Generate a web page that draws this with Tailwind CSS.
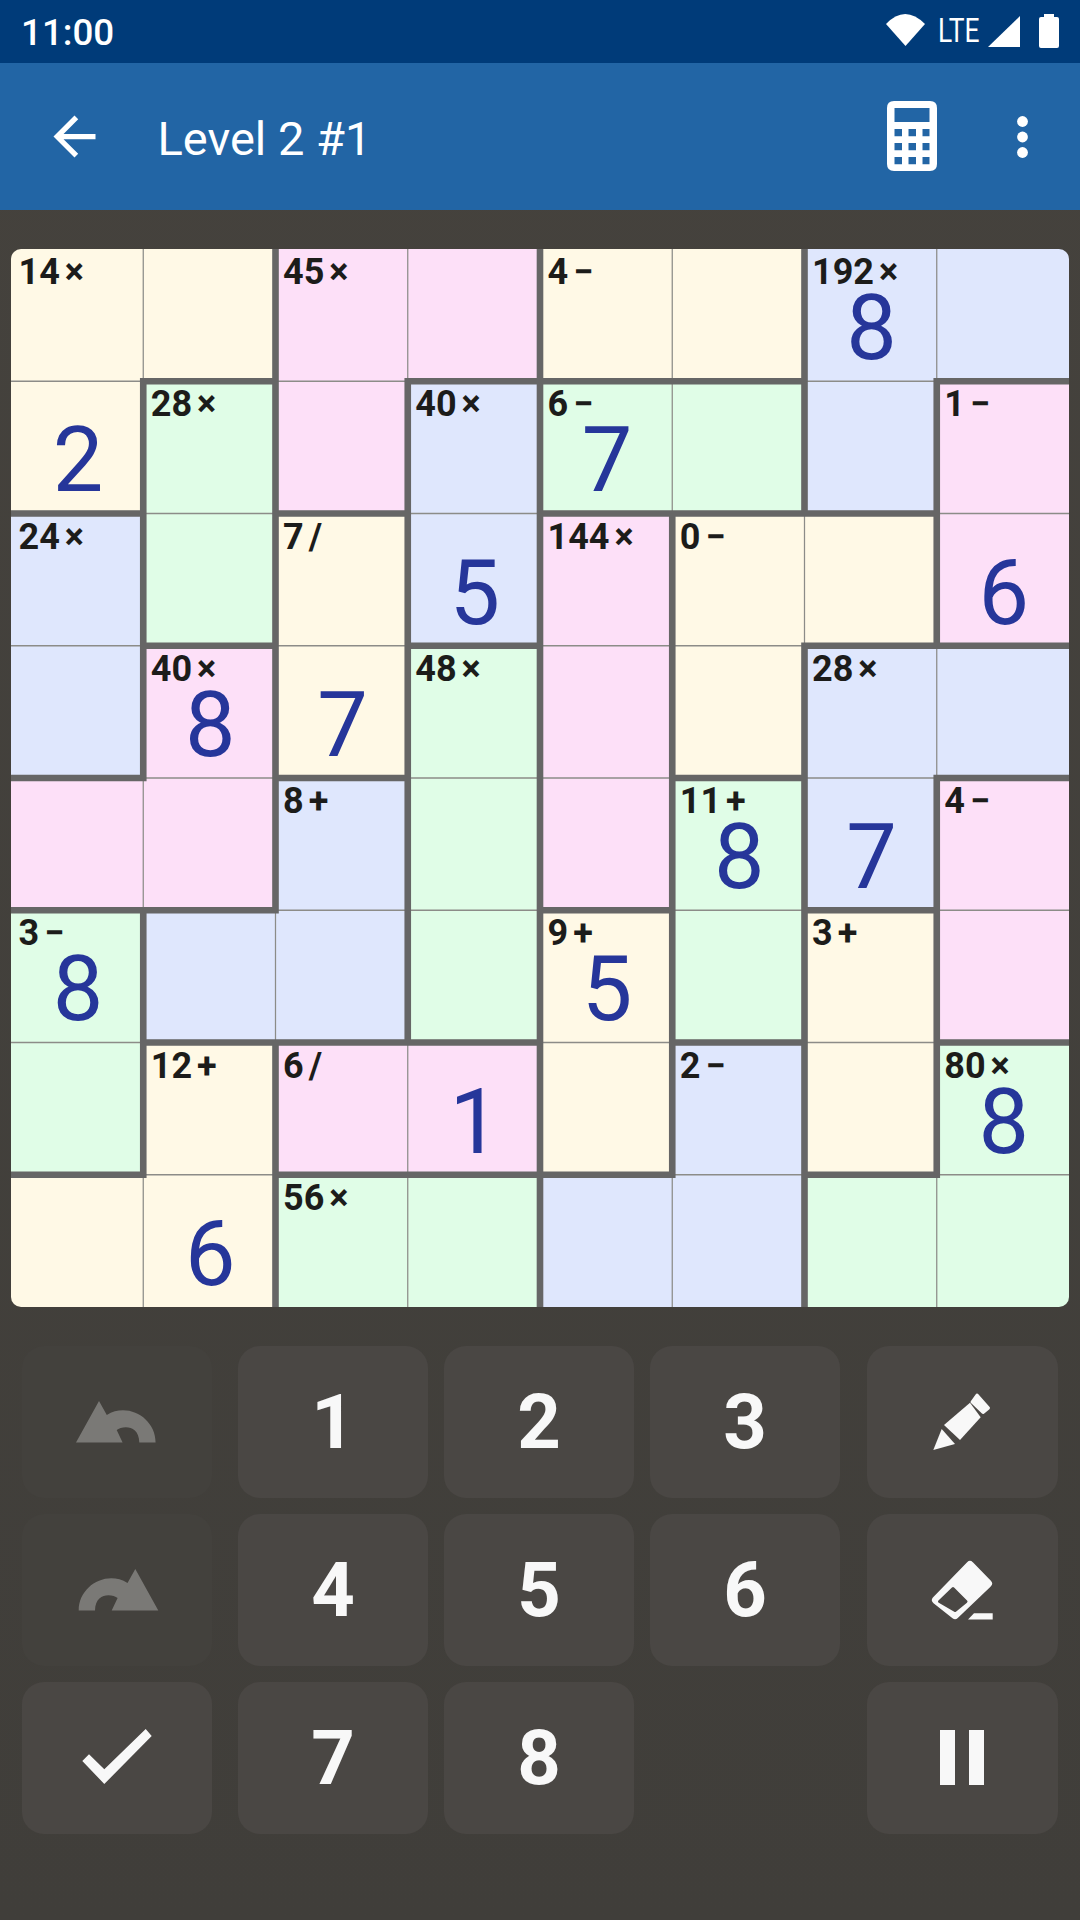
<!DOCTYPE html>
<html>
<head>
<meta charset="utf-8">
<script src="https://cdn.jsdelivr.net/npm/@tailwindcss/browser@4"></script>
</head>
<body>
<div class="w-[1080px] h-[1920px] flex flex-col bg-linear-to-b from-[#45423d] to-[#403e3a] overflow-hidden [font-family:Roboto,sans-serif]">
  <!-- status bar -->
  <div class="h-[63px] shrink-0 flex items-center bg-[#003b79] text-white">
    <span class="ml-[21px] mt-[3px] text-[36.75px] font-medium leading-none">11:00</span>
    <svg class="ml-auto w-[39px] h-[32px] mt-[-3px]" viewBox="886 14 39 32"><path fill="#fff" d="M886 24Q905 4 925 24L905.5 46Z"/></svg>
    <span class="ml-[13px] w-[50px] text-[33px] font-normal leading-none origin-left scale-x-[.8] mt-[-2px]">LTE</span>
    <svg class="w-[32px] h-[31px] mt-[-1px]" viewBox="988 15 32 31"><path fill="#fff" d="M988 46L1020 15V46Z"/></svg>
    <svg class="ml-[19px] mr-[21px] w-[20px] h-[34px] mt-[-1px]" viewBox="0 0 20 34"><path fill="#fff" d="M5 0H15V3H18Q20 3 20 5V32Q20 34 18 34H2Q0 34 0 32V5Q0 3 2 3H5Z"/></svg>
  </div>
  <!-- app bar -->
  <div class="h-[147px] shrink-0 flex items-center bg-[#2265a5] text-white">
    <svg class="ml-[42.5px] w-[63px] h-[63px] mt-[-1px]" viewBox="0 0 24 24"><path fill="#fff" d="M20 11H7.83l5.59-5.59L12 4l-8 8 8 8 1.41-1.41L7.83 13H20v-2z"/></svg>
    <span class="ml-[52px] mt-[3px] text-[47px] leading-none">Level 2 #1</span>
    <svg class="ml-auto w-[50px] h-[70px] mt-[-1px]" viewBox="0 0 50 70"><path fill="#fff" fill-rule="evenodd" d="M7 0H43Q50 0 50 7V63Q50 70 43 70H7Q0 70 0 63V7Q0 0 7 0ZM7.5 7V21H42.5V7ZM7.5 28V35.3H15V28ZM21.5 28V35.3H29V28ZM35.5 28V35.3H42.5V28ZM7.5 42V49.3H15V42ZM21.5 42V49.3H29V42ZM35.5 42V49.3H42.5V42ZM7.5 56V63.3H15V56ZM21.5 56V63.3H29V56ZM35.5 56V63.3H42.5V56Z"/></svg>
    <svg class="ml-[80px] mr-[52px] w-[11px] h-[42px]" viewBox="0 0 11 42"><circle cx="5.5" cy="5.5" r="5.4" fill="#fff"/><circle cx="5.5" cy="21" r="5.4" fill="#fff"/><circle cx="5.5" cy="36.5" r="5.4" fill="#fff"/></svg>
  </div>
  <!-- board -->
  <div class="relative mt-[39px] ml-[11px] w-[1058px] h-[1058px] shrink-0 rounded-[10px] overflow-hidden text-[#1c1c1a]">
    <div class="grid grid-cols-8 grid-rows-8 w-full h-full">
      <!-- r0 -->
      <div class="grid bg-[#fff9e6]"><span class="[grid-area:1/1] pl-[7.5px] pt-[5px] text-[36px] font-bold leading-none">14<span class="ml-[5px]">×</span></span></div>
      <div class="grid bg-[#fff9e6]"></div>
      <div class="grid bg-[#fde0f8]"><span class="[grid-area:1/1] pl-[7.5px] pt-[5px] text-[36px] font-bold leading-none">45<span class="ml-[5px]">×</span></span></div>
      <div class="grid bg-[#fde0f8]"></div>
      <div class="grid bg-[#fff9e6]"><span class="[grid-area:1/1] pl-[7.5px] pt-[5px] text-[36px] font-bold leading-none">4<span class="ml-[5px]">−</span></span></div>
      <div class="grid bg-[#fff9e6]"></div>
      <div class="grid bg-[#dfe7fd]"><span class="[grid-area:1/1] pl-[7.5px] pt-[5px] text-[36px] font-bold leading-none">192<span class="ml-[5px]">×</span></span><span class="[grid-area:1/1] self-center justify-self-center translate-x-px translate-y-[14px] text-[90px] leading-none text-[#26369a]">8</span></div>
      <div class="grid bg-[#dfe7fd]"></div>
      <!-- r1 -->
      <div class="grid bg-[#fff9e6]"><span class="[grid-area:1/1] self-center justify-self-center translate-x-px translate-y-[14px] text-[90px] leading-none text-[#26369a]">2</span></div>
      <div class="grid bg-[#e0fde7]"><span class="[grid-area:1/1] pl-[7.5px] pt-[5px] text-[36px] font-bold leading-none">28<span class="ml-[5px]">×</span></span></div>
      <div class="grid bg-[#fde0f8]"></div>
      <div class="grid bg-[#dfe7fd]"><span class="[grid-area:1/1] pl-[7.5px] pt-[5px] text-[36px] font-bold leading-none">40<span class="ml-[5px]">×</span></span></div>
      <div class="grid bg-[#e0fde7]"><span class="[grid-area:1/1] pl-[7.5px] pt-[5px] text-[36px] font-bold leading-none">6<span class="ml-[5px]">−</span></span><span class="[grid-area:1/1] self-center justify-self-center translate-x-px translate-y-[14px] text-[90px] leading-none text-[#26369a]">7</span></div>
      <div class="grid bg-[#e0fde7]"></div>
      <div class="grid bg-[#dfe7fd]"></div>
      <div class="grid bg-[#fde0f8]"><span class="[grid-area:1/1] pl-[7.5px] pt-[5px] text-[36px] font-bold leading-none">1<span class="ml-[5px]">−</span></span></div>
      <!-- r2 -->
      <div class="grid bg-[#dfe7fd]"><span class="[grid-area:1/1] pl-[7.5px] pt-[5px] text-[36px] font-bold leading-none">24<span class="ml-[5px]">×</span></span></div>
      <div class="grid bg-[#e0fde7]"></div>
      <div class="grid bg-[#fff9e6]"><span class="[grid-area:1/1] pl-[7.5px] pt-[5px] text-[36px] font-bold leading-none">7<span class="ml-[5px]">/</span></span></div>
      <div class="grid bg-[#dfe7fd]"><span class="[grid-area:1/1] self-center justify-self-center translate-x-px translate-y-[14px] text-[90px] leading-none text-[#26369a]">5</span></div>
      <div class="grid bg-[#fde0f8]"><span class="[grid-area:1/1] pl-[7.5px] pt-[5px] text-[36px] font-bold leading-none">144<span class="ml-[5px]">×</span></span></div>
      <div class="grid bg-[#fff9e6]"><span class="[grid-area:1/1] pl-[7.5px] pt-[5px] text-[36px] font-bold leading-none">0<span class="ml-[5px]">−</span></span></div>
      <div class="grid bg-[#fff9e6]"></div>
      <div class="grid bg-[#fde0f8]"><span class="[grid-area:1/1] self-center justify-self-center translate-x-px translate-y-[14px] text-[90px] leading-none text-[#26369a]">6</span></div>
      <!-- r3 -->
      <div class="grid bg-[#dfe7fd]"></div>
      <div class="grid bg-[#fde0f8]"><span class="[grid-area:1/1] pl-[7.5px] pt-[5px] text-[36px] font-bold leading-none">40<span class="ml-[5px]">×</span></span><span class="[grid-area:1/1] self-center justify-self-center translate-x-px translate-y-[14px] text-[90px] leading-none text-[#26369a]">8</span></div>
      <div class="grid bg-[#fff9e6]"><span class="[grid-area:1/1] self-center justify-self-center translate-x-px translate-y-[14px] text-[90px] leading-none text-[#26369a]">7</span></div>
      <div class="grid bg-[#e0fde7]"><span class="[grid-area:1/1] pl-[7.5px] pt-[5px] text-[36px] font-bold leading-none">48<span class="ml-[5px]">×</span></span></div>
      <div class="grid bg-[#fde0f8]"></div>
      <div class="grid bg-[#fff9e6]"></div>
      <div class="grid bg-[#dfe7fd]"><span class="[grid-area:1/1] pl-[7.5px] pt-[5px] text-[36px] font-bold leading-none">28<span class="ml-[5px]">×</span></span></div>
      <div class="grid bg-[#dfe7fd]"></div>
      <!-- r4 -->
      <div class="grid bg-[#fde0f8]"></div>
      <div class="grid bg-[#fde0f8]"></div>
      <div class="grid bg-[#dfe7fd]"><span class="[grid-area:1/1] pl-[7.5px] pt-[5px] text-[36px] font-bold leading-none">8<span class="ml-[5px]">+</span></span></div>
      <div class="grid bg-[#e0fde7]"></div>
      <div class="grid bg-[#fde0f8]"></div>
      <div class="grid bg-[#e0fde7]"><span class="[grid-area:1/1] pl-[7.5px] pt-[5px] text-[36px] font-bold leading-none">11<span class="ml-[5px]">+</span></span><span class="[grid-area:1/1] self-center justify-self-center translate-x-px translate-y-[14px] text-[90px] leading-none text-[#26369a]">8</span></div>
      <div class="grid bg-[#dfe7fd]"><span class="[grid-area:1/1] self-center justify-self-center translate-x-px translate-y-[14px] text-[90px] leading-none text-[#26369a]">7</span></div>
      <div class="grid bg-[#fde0f8]"><span class="[grid-area:1/1] pl-[7.5px] pt-[5px] text-[36px] font-bold leading-none">4<span class="ml-[5px]">−</span></span></div>
      <!-- r5 -->
      <div class="grid bg-[#e0fde7]"><span class="[grid-area:1/1] pl-[7.5px] pt-[5px] text-[36px] font-bold leading-none">3<span class="ml-[5px]">−</span></span><span class="[grid-area:1/1] self-center justify-self-center translate-x-px translate-y-[14px] text-[90px] leading-none text-[#26369a]">8</span></div>
      <div class="grid bg-[#dfe7fd]"></div>
      <div class="grid bg-[#dfe7fd]"></div>
      <div class="grid bg-[#e0fde7]"></div>
      <div class="grid bg-[#fff9e6]"><span class="[grid-area:1/1] pl-[7.5px] pt-[5px] text-[36px] font-bold leading-none">9<span class="ml-[5px]">+</span></span><span class="[grid-area:1/1] self-center justify-self-center translate-x-px translate-y-[14px] text-[90px] leading-none text-[#26369a]">5</span></div>
      <div class="grid bg-[#e0fde7]"></div>
      <div class="grid bg-[#fff9e6]"><span class="[grid-area:1/1] pl-[7.5px] pt-[5px] text-[36px] font-bold leading-none">3<span class="ml-[5px]">+</span></span></div>
      <div class="grid bg-[#fde0f8]"></div>
      <!-- r6 -->
      <div class="grid bg-[#e0fde7]"></div>
      <div class="grid bg-[#fff9e6]"><span class="[grid-area:1/1] pl-[7.5px] pt-[5px] text-[36px] font-bold leading-none">12<span class="ml-[5px]">+</span></span></div>
      <div class="grid bg-[#fde0f8]"><span class="[grid-area:1/1] pl-[7.5px] pt-[5px] text-[36px] font-bold leading-none">6<span class="ml-[5px]">/</span></span></div>
      <div class="grid bg-[#fde0f8]"><span class="[grid-area:1/1] self-center justify-self-center translate-x-px translate-y-[14px] text-[90px] leading-none text-[#26369a]">1</span></div>
      <div class="grid bg-[#fff9e6]"></div>
      <div class="grid bg-[#dfe7fd]"><span class="[grid-area:1/1] pl-[7.5px] pt-[5px] text-[36px] font-bold leading-none">2<span class="ml-[5px]">−</span></span></div>
      <div class="grid bg-[#fff9e6]"></div>
      <div class="grid bg-[#e0fde7]"><span class="[grid-area:1/1] pl-[7.5px] pt-[5px] text-[36px] font-bold leading-none">80<span class="ml-[5px]">×</span></span><span class="[grid-area:1/1] self-center justify-self-center translate-x-px translate-y-[14px] text-[90px] leading-none text-[#26369a]">8</span></div>
      <!-- r7 -->
      <div class="grid bg-[#fff9e6]"></div>
      <div class="grid bg-[#fff9e6]"><span class="[grid-area:1/1] self-center justify-self-center translate-x-px translate-y-[14px] text-[90px] leading-none text-[#26369a]">6</span></div>
      <div class="grid bg-[#e0fde7]"><span class="[grid-area:1/1] pl-[7.5px] pt-[5px] text-[36px] font-bold leading-none">56<span class="ml-[5px]">×</span></span></div>
      <div class="grid bg-[#e0fde7]"></div>
      <div class="grid bg-[#dfe7fd]"></div>
      <div class="grid bg-[#dfe7fd]"></div>
      <div class="grid bg-[#e0fde7]"></div>
      <div class="grid bg-[#e0fde7]"></div>
    </div>
    <svg class="absolute inset-0 w-full h-full pointer-events-none" viewBox="0 0 8 8" fill="none">
      <path stroke="#8c8c88" stroke-width=".0095" d="M1 0V8M2 0V8M3 0V8M4 0V8M5 0V8M6 0V8M7 0V8M0 1H8M0 2H8M0 3H8M0 4H8M0 5H8M0 6H8M0 7H8"/>
      <path stroke="#666666" stroke-width=".05" stroke-linecap="square" d="M1 1H2M3 1H6M7 1H8M0 2H1M2 2H3M4 2H7M1 3H2M3 3H4M6 3H8M0 4H1M2 4H3M5 4H6M7 4H8M0 5H2M4 5H5M6 5H7M1 6H4M5 6H6M7 6H8M0 7H1M2 7H5M6 7H7M1 1V4M1 5V7M2 0V5M2 6V8M3 1V6M4 0V8M5 2V7M6 0V2M6 3V8M7 1V3M7 4V7"/>
    </svg>
  </div>
  <!-- keypad -->
  <div class="mt-[39px] ml-[22px] flex shrink-0">
    <div class="flex flex-col gap-4 w-[190px]">
      <div class="h-[152px] rounded-[22px] bg-[#43413d]"><svg class="w-full h-full" viewBox="22 1346 190 152"><path fill="#7a7976" d="M99 1401L76 1442.6H122.6L116.7 1430C122 1426 139 1424 139.3 1442.6H155.6C155.6 1418 128 1402 106.8 1415Z"/></svg></div>
      <div class="h-[152px] rounded-[22px] bg-[#43413d]"><svg class="w-full h-full" viewBox="22 1514 190 152"><path fill="#7a7976" d="M135.3 1569L158.3 1610.6H111.7L117.6 1598C112.3 1594 95.3 1592 95 1610.6H78.7C78.7 1586 106.3 1570 127.5 1583Z"/></svg></div>
      <div class="h-[152px] rounded-[22px] bg-[#4a4744]"><svg class="w-full h-full" viewBox="22 1682 190 152"><path fill="#f8f8f8" d="M82.3 1761L89 1754.3L104.3 1769.3L145.7 1729L151.7 1736L104.3 1784Z"/></svg></div>
    </div>
    <div class="ml-[26px] grid grid-cols-3 gap-4 w-[602px] grid-rows-[152px_152px_152px] text-[76px] font-bold text-[#f8f8f8] leading-none">
      <div class="rounded-[22px] bg-[#4a4744] flex items-center justify-center">1</div>
      <div class="rounded-[22px] bg-[#4a4744] flex items-center justify-center">2</div>
      <div class="rounded-[22px] bg-[#4a4744] flex items-center justify-center">3</div>
      <div class="rounded-[22px] bg-[#4a4744] flex items-center justify-center">4</div>
      <div class="rounded-[22px] bg-[#4a4744] flex items-center justify-center">5</div>
      <div class="rounded-[22px] bg-[#4a4744] flex items-center justify-center">6</div>
      <div class="rounded-[22px] bg-[#4a4744] flex items-center justify-center">7</div>
      <div class="rounded-[22px] bg-[#4a4744] flex items-center justify-center">8</div>
    </div>
    <div class="ml-[27px] flex flex-col gap-4 w-[191px]">
      <div class="h-[152px] rounded-[22px] bg-[#4a4744]"><svg class="w-full h-full" viewBox="867 1346 191 152"><path fill="#f8f8f8" d="M933.3 1450L941.7 1429L955 1444Z"/><path fill="#f8f8f8" d="M944 1425L970 1402.7L980.7 1417.3L960 1440Z"/><path fill="#f8f8f8" stroke="#f8f8f8" stroke-width="3" stroke-linejoin="round" d="M972 1402L977 1395L988.5 1408L983 1412.5Z"/></svg></div>
      <div class="h-[152px] rounded-[22px] bg-[#4a4744]"><svg class="w-full h-full" viewBox="867 1514 191 152"><path fill="#f8f8f8" stroke="#f8f8f8" stroke-width="8" stroke-linejoin="round" d="M936 1600L970 1565L988 1583.5L955 1615Z"/><path fill="#4a4744" stroke="#4a4744" stroke-width="3" stroke-linejoin="round" d="M939.5 1601.5L953 1588.5L966 1601.5L955 1610.5Z"/><path fill="#f8f8f8" d="M974 1613.3H992.7V1619.5H968Z"/></svg></div>
      <div class="h-[152px] rounded-[22px] bg-[#4a4744]"><svg class="w-full h-full" viewBox="867 1682 191 152"><path fill="#f8f8f8" d="M940 1730H955V1785H940ZM969 1730H984V1785H969Z"/></svg></div>
    </div>
  </div>
</div>
</body>
</html>
